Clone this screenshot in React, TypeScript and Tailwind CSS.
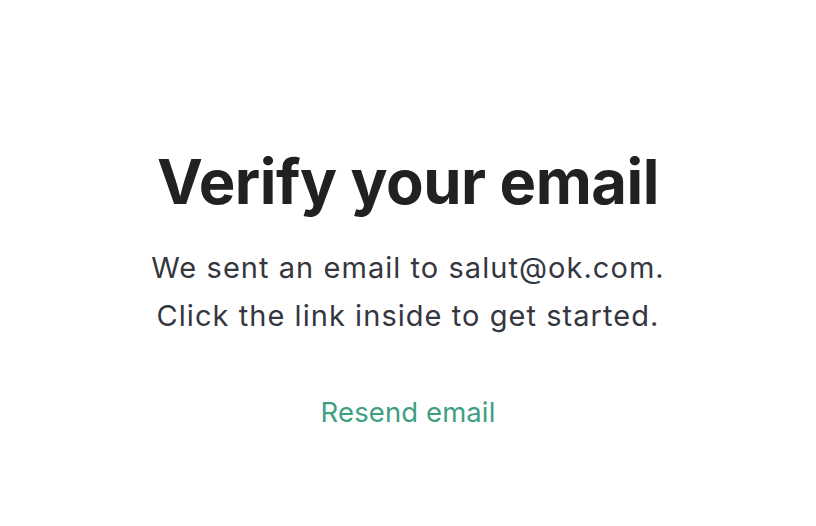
export default function App() {
  return (
    <div className="flex min-h-[526px] w-full flex-col items-center bg-white pt-[146px] font-['Inter',sans-serif] text-center">
      <h1 className="text-[61.5px] font-bold leading-[72px] tracking-[-0.5px] text-[#202123]">Verify your email</h1>
      <p className="mt-[26px] text-[29px] leading-[48px] tracking-[1.05px] text-[#353740]">
        We sent an email to salut@ok.com.
        <br />
        Click the link inside to get started.
      </p>
      <button className="mt-[52px] text-[27.5px] leading-[40px] tracking-[0.1px] text-[#3f9f80]">Resend email</button>
    </div>
  );
}
